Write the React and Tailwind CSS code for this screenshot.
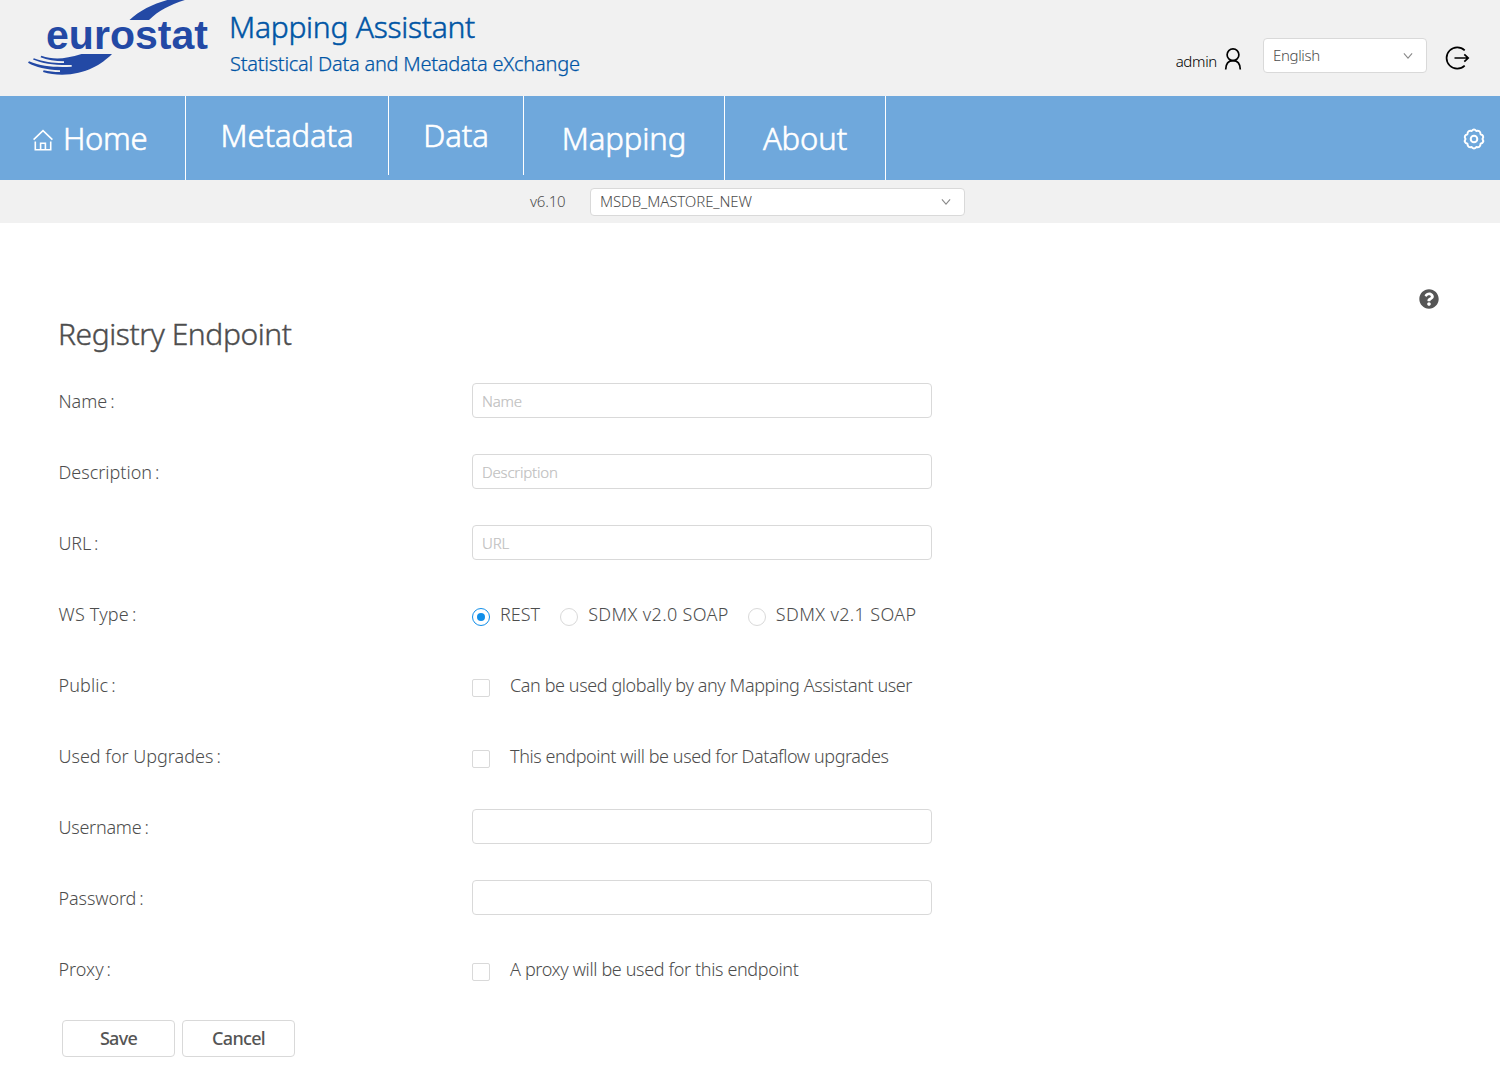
import { FaQuestionCircle } from 'react-icons/fa';

function EurostatLogo() {
  return (
    <svg width="184" height="80" viewBox="0 0 184 80" className="block shrink-0" fill="#2349a5">
      <path d="M101.500 20 C112 10 127 3 143 -1 L160 -1 C144 4 131 10 121 20 Z" />
      <text
        x="18"
        y="48.7"
        fontFamily="Liberation Sans, Arial, sans-serif"
        fontSize="41"
        fontWeight="700"
        textLength="162"
      >
        eurostat
      </text>
      <path d="M53.500 54 L84 54 C74 64 58 74.500 34 74.700 C27 74.700 21 74 15 72 L15.600 70.200 C21 71.300 26 71.900 32 72 L32 70.200 C18 69.800 8 67.500 0 62.800 L1 61.200 C14 66.600 26 67.300 43.700 66.700 L43.700 65 C26 65.300 15 63.800 5 59.500 L5.800 58.200 C16 61.800 25 63 36 62.900 L36 61.200 C27 61 19 60 12.500 57.200 L13.400 55.800 C25 59.600 36 59.500 53.500 54 Z" />
    </svg>
  );
}

function UserIcon() {
  return (
    <svg width="18" height="24" viewBox="0 0 18 24" fill="none" stroke="#000" strokeWidth="1.7" className="shrink-0">
      <circle cx="9" cy="7.700" r="5.900" />
      <path d="M1.700 22.500 C1.800 17 4.500 13.600 9 13.600 C13.500 13.600 16.200 17 16.300 22.500" />
    </svg>
  );
}

function LogoutIcon() {
  return (
    <svg width="25" height="24" viewBox="0 0 25 24" fill="none" stroke="#000" strokeWidth="1.700" className="shrink-0">
      <path d="M19.700 4.300 A10.700 10.700 0 1 0 19.700 19.700" />
      <path d="M9.500 12 H23 M19.300 8.300 L23.200 12 L19.300 15.700" />
    </svg>
  );
}

function HomeIcon() {
  return (
    <svg width="20" height="22" viewBox="0 0 20 22" fill="none" stroke="#fff" strokeWidth="1.600" className="shrink-0">
      <path d="M0.600 10.600 L10 1.700 L19.400 10.600" />
      <path d="M2.300 12.600 V20.700 H17.700 V12.600" />
      <path d="M7.600 20.700 V14.200 H12.400 V20.700" />
    </svg>
  );
}

function GearIcon() {
  return (
    <svg width="22" height="22" viewBox="0 0 22 22" fill="none" stroke="#fff" strokeWidth="2" strokeLinejoin="round" className="shrink-0">
      <path d="M8.700 3 Q11 0 13.300 3 Q17.300 2 17.600 6.200 Q21.600 7.500 19.500 11 Q21.600 14.500 17.600 15.800 Q17.300 20 13.300 19 Q11 22 8.700 19 Q4.700 20 4.400 15.800 Q0.400 14.500 2.500 11 Q0.400 7.500 4.400 6.200 Q4.700 2 8.700 3 Z" />
      <circle cx="11" cy="11" r="3.300" />
    </svg>
  );
}

function Chevron() {
  return (
    <svg width="10" height="8" viewBox="0 0 10 8" fill="none" stroke="#8a8a8a" strokeWidth="1.100" className="shrink-0">
      <path d="M0.900 1.400 L5 6.200 L9.100 1.400" />
    </svg>
  );
}

function Field({ label, tracking = '', children }) {
  return (
    <div className="flex h-[35px] items-center">
      <div className="w-[414px] shrink-0 pl-[0.5px] pt-[2px] text-[18px] leading-[35px]">
        <span className={tracking}>{label}</span>
        <span className="ml-[3px]">:</span>
      </div>
      {children}
    </div>
  );
}

function TextInput({ placeholder, type = 'text' }) {
  return (
    <input
      type={type}
      placeholder={placeholder}
      className="h-[35px] w-[460px] rounded-[4px] border border-[#d9d9d9] bg-white px-[9px] text-[15px] font-light tracking-[-0.2px] outline-none [-webkit-text-stroke:0.2px] placeholder:text-[#bfbfbf]"
    />
  );
}

function Check({ tracking, children }) {
  return (
    <label className="flex items-center">
      <span className="mt-[7px] size-[18px] rounded-[2px] border border-[#d9d9d9] bg-white" />
      <span className={`ml-5 whitespace-nowrap pt-[2px] text-[18px] leading-[35px] ${tracking}`}>{children}</span>
    </label>
  );
}

function Radio({ checked = false, tracking = '', className = '', children }) {
  return (
    <label className={`flex items-center ${className}`}>
      <span
        className={
          checked
            ? 'mt-[7px] flex size-[18px] items-center justify-center rounded-full border border-[#108ee9] bg-white'
            : 'mt-[7px] size-[18px] rounded-full border border-[#d9d9d9] bg-white'
        }
      >
        {checked && <span className="size-2 rounded-full bg-[#108ee9]" />}
      </span>
      <span className={`ml-[10px] whitespace-nowrap pt-[2px] text-[18px] leading-[35px] ${tracking}`}>{children}</span>
    </label>
  );
}

export default function App() {
  return (
    <div className="min-h-[1090px] w-[1500px] bg-white font-['Noto_Sans',sans-serif] font-light text-[#4d4d4d]">
      <header className="flex h-24 bg-[#f1f1f1]">
        <div className="flex pl-[28px]">
          <EurostatLogo />
          <div className="pl-[17px] text-[#0055a5]">
            <h1 className="mt-[6px] whitespace-nowrap text-[30px] leading-[42px] tracking-[-0.27px] [-webkit-text-stroke:0.5px]">Mapping Assistant</h1>
            <p className="mt-[2px] pl-px whitespace-nowrap text-[20px] leading-[28px] tracking-[-0.24px] [-webkit-text-stroke:0.25px]">
              Statistical Data and Metadata eXchange
            </p>
          </div>
        </div>
        <div className="ml-auto flex pr-[30px]">
          <span className="mt-[51px] text-[15px] leading-5 tracking-[-0.3px] text-black">admin</span>
          <div className="ml-[7px] mt-[47px]">
            <UserIcon />
          </div>
          <div className="ml-[21px] mt-[38px] flex h-[35px] w-[164px] items-center justify-between rounded-[4px] border border-[#d9d9d9] bg-white pl-[9px] pr-[13px] text-[15px] tracking-[-0.35px]">
            <span>English</span>
            <Chevron />
          </div>
          <div className="ml-[18px] mt-[46px]">
            <LogoutIcon />
          </div>
        </div>
      </header>

      <nav className="flex h-[84px] bg-[#6fa8dc] text-[31px] tracking-[-0.1px] text-white [-webkit-text-stroke:0.6px]">
        <a className="flex h-[84px] w-[186px] items-center border-r border-white pl-[33px] pt-px tracking-[-0.35px]">
          <span className="mt-[3px]">
            <HomeIcon />
          </span>
          <span className="ml-[10px]">Home</span>
        </a>
        <a className="flex h-[79px] w-[203px] items-center justify-center border-r border-white">Metadata</a>
        <a className="flex h-[79px] w-[135px] items-center justify-center border-r border-white">Data</a>
        <a className="flex h-[84px] w-[201px] items-center justify-center border-r border-white pt-px">Mapping</a>
        <a className="flex h-[84px] w-[161px] items-center justify-center border-r border-white pt-px">About</a>
        <div className="ml-auto flex items-center pr-[15px] pt-px">
          <GearIcon />
        </div>
      </nav>

      <div className="flex h-[43px] items-start bg-[#f1f1f1] pl-[530px] text-[15px] tracking-[-0.1px]">
        <span className="mt-[7px] w-[60px] leading-7 tracking-[-0.2px]">v6.10</span>
        <div className="mt-2 flex h-7 w-[375px] items-center justify-between rounded-[4px] border border-[#d9d9d9] bg-white pl-[9px] pr-[13px]">
          <span className="pb-[2px]">MSDB_MASTORE_NEW</span>
          <Chevron />
        </div>
      </div>

      <main className="px-[58px]">
        <div className="flex h-[86px] items-end justify-end pr-[3px]">
          <FaQuestionCircle size={20} color="#555" />
        </div>
        <h2 className="mt-[4px] h-[42px] text-[30px] leading-[42px] tracking-[-0.42px] [-webkit-text-stroke:0.4px]">Registry Endpoint</h2>
        <form className="mt-[28px] flex flex-col gap-9">
          <Field label="Name"><TextInput placeholder="Name" /></Field>
          <Field label="Description"><TextInput placeholder="Description" /></Field>
          <Field label="URL" tracking="tracking-[-0.2px]"><TextInput placeholder="URL" /></Field>
          <Field label="WS Type" tracking="tracking-[0.2px]">
            <Radio checked>REST</Radio>
            <Radio className="ml-[20px]" tracking="tracking-[0.35px]">SDMX v2.0 SOAP</Radio>
            <Radio className="ml-[19px]" tracking="tracking-[0.35px]">SDMX v2.1 SOAP</Radio>
          </Field>
          <Field label="Public" tracking="tracking-[0.1px]">
            <Check tracking="tracking-[-0.4px]">Can be used globally by any Mapping Assistant user</Check>
          </Field>
          <Field label="Used for Upgrades">
            <Check tracking="tracking-[-0.42px]">This endpoint will be used for Dataflow upgrades</Check>
          </Field>
          <Field label="Username" tracking="tracking-[-0.25px]"><TextInput /></Field>
          <Field label="Password" tracking="tracking-[-0.1px]"><TextInput type="password" /></Field>
          <Field label="Proxy">
            <Check tracking="tracking-[-0.36px]">A proxy will be used for this endpoint</Check>
          </Field>
        </form>
        <div className="mt-[34px] flex gap-[7px] pl-1 text-[18px] font-medium text-[#555]">
          <button className="h-[37px] w-[113px] rounded-[4px] border border-[#d9d9d9] bg-white tracking-[-0.7px]">Save</button>
          <button className="h-[37px] w-[113px] rounded-[4px] border border-[#d9d9d9] bg-white tracking-[-0.7px]">Cancel</button>
        </div>
      </main>
    </div>
  );
}
